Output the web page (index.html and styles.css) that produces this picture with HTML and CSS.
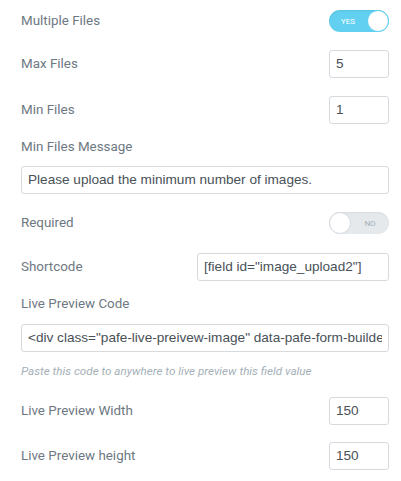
FILE: index.html
```html
<!DOCTYPE html>
<html>
<head>
<meta charset="utf-8">
<link rel="stylesheet" href="styles.css">
</head>
<body>
<div class="panel">
  <div class="row row-toggle mt-a">
    <span class="label">Multiple Files</span>
    <span class="switch on"><span class="switch-text">YES</span><span class="knob"></span></span>
  </div>
  <div class="row mt-16">
    <span class="label">Max Files</span>
    <span class="input small">5</span>
  </div>
  <div class="row mt-18">
    <span class="label">Min Files</span>
    <span class="input small">1</span>
  </div>
  <div class="label block mt-14">Min Files Message</div>
  <div class="input wide mt-10">Please upload the minimum number of images.</div>
  <div class="row row-toggle mt-16">
    <span class="label">Required</span>
    <span class="switch off"><span class="knob"></span><span class="switch-text">NO</span></span>
  </div>
  <div class="row mt-17">
    <span class="label">Shortcode</span>
    <span class="input medium">[field id="image_upload2"]</span>
  </div>
  <div class="label block mt-14">Live Preview Code</div>
  <div class="input wide mt-11"><span class="clip">&lt;div class="pafe-live-preivew-image" data-pafe-form-builder-live-preview="image_upload2"&gt;&lt;/div&gt;</span></div>
  <div class="help mt-10">Paste this code to anywhere to live preview this field value</div>
  <div class="row mt-17">
    <span class="label">Live Preview Width</span>
    <span class="input small">150</span>
  </div>
  <div class="row mt-17">
    <span class="label">Live Preview height</span>
    <span class="input small">150</span>
  </div>
</div>
</body>
</html>
```
FILE: styles.css
```css
html, body {
  margin: 0;
  padding: 0;
  background: #ffffff;
}
.panel {
  padding: 0 12px 0 21px;
  display: flex;
  flex-direction: column;
}
.label {
  font-family: Roboto, "Liberation Sans", sans-serif;
  font-size: 13.4px;
  color: #6d7882;
  line-height: 18px;
}
.block { display: block; }
.row {
  display: flex;
  align-items: center;
  justify-content: space-between;
  height: 28px;
}
.row-toggle { height: 26px; }
.mt-a { margin-top: 8px; }
.mt-10 { margin-top: 10px; }
.mt-11 { margin-top: 11px; }
.mt-14 { margin-top: 14px; }
.mt-16 { margin-top: 16px; }
.mt-17 { margin-top: 17px; }
.mt-18 { margin-top: 18px; }
.input {
  box-sizing: border-box;
  height: 28px;
  border: 1px solid #d5dadf;
  border-radius: 3px;
  padding: 0 6px;
  font-family: "Liberation Sans", Arial, sans-serif;
  font-size: 13.6px;
  color: #495157;
  line-height: 26px;
  white-space: nowrap;
  overflow: hidden;
  background: #fff;
}
.clip {
  display: block;
  overflow: hidden;
  white-space: nowrap;
}
.small { width: 60px; }
.medium { width: 192px; }
.wide { width: 100%; }
.help {
  font-family: Roboto, "Liberation Sans", sans-serif;
  font-size: 11.65px;
  font-style: italic;
  color: #a4afb7;
  line-height: 18px;
}
.switch {
  box-sizing: border-box;
  width: 60px;
  height: 22px;
  border-radius: 11px;
  display: flex;
  align-items: center;
  position: relative;
}
.switch.on {
  background: #61d0f1;
  box-shadow: inset 0 1px 2px rgba(0,0,0,0.08);
}
.switch.off {
  background: #e6e9ec;
  box-shadow: inset 0 1px 2px rgba(0,0,0,0.06);
}
.switch-text {
  font-family: Roboto, "Liberation Sans", sans-serif;
  font-size: 8px;
  text-transform: uppercase;
  flex: 1;
  text-align: center;
}
.switch.on .switch-text { color: #ffffff; }
.switch.off .switch-text { color: #a4afb7; }
.knob {
  box-sizing: border-box;
  width: 22px;
  height: 22px;
  border-radius: 50%;
  background: #ffffff;
  border: 1px solid #d5dadf;
  flex: none;
}
.switch.on .knob { border-color: #61d0f1; }
```
